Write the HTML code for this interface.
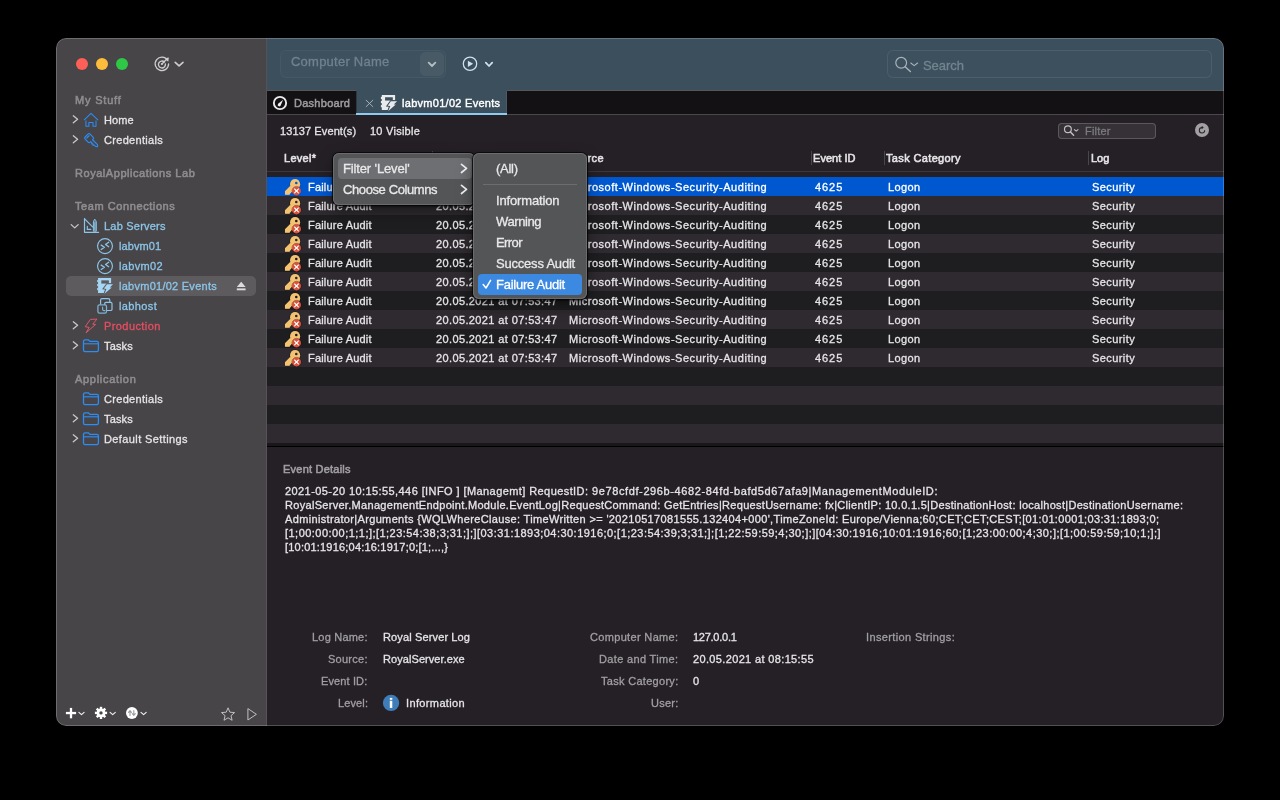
<!DOCTYPE html>
<html><head><meta charset="utf-8"><title>Royal TSX</title>
<style>
html,body{margin:0;padding:0;background:#000;}
body{width:1280px;height:800px;overflow:hidden;position:relative;font-family:"Liberation Sans",sans-serif;font-size:11px;}
.a{position:absolute;}
.t{position:absolute;white-space:pre;line-height:1;z-index:2;font-size:11px;will-change:transform;-webkit-text-stroke:0.3px currentColor;}
.b{-webkit-text-stroke:0.55px currentColor;}
svg{position:absolute;overflow:visible;}
#win{position:absolute;left:56px;top:38px;width:1168px;height:688px;border-radius:10px;overflow:hidden;background:#252026;}
</style></head><body>
<div class="a" id="clip" style="left:0;top:0;width:1280px;height:800px;clip-path:inset(38px 56px 74px 56px round 10px);">
<div class="a" style="left:56px;top:38px;width:210px;height:688px;background:#474547;"></div>
<div class="a" style="left:266px;top:38px;width:1px;height:688px;background:#555355;"></div>
<div class="a" style="left:267px;top:38px;width:957px;height:52px;background:#3c4f5c;"></div>
<div class="a" style="left:267px;top:91px;width:957px;height:24px;background:#131113;"></div>
<div class="a" style="left:267px;top:90px;width:957px;height:1px;background:#575757;"></div>
<div class="a" style="left:267px;top:114px;width:957px;height:1px;background:#4a484b;"></div>
<div class="a" style="left:356px;top:90px;width:151px;height:25px;background:#3c4f5c;"></div>
<div class="a" style="left:356px;top:113px;width:151px;height:2px;background:#8fcaf0;"></div>
<div class="a" style="left:356px;top:91px;width:1px;height:22px;background:#2c3a44;"></div>
<div class="a" style="left:506px;top:91px;width:1px;height:22px;background:#4b5a64;"></div>
<div class="a" style="left:267px;top:115px;width:957px;height:611px;background:#252026;"></div>
<div class="a" style="left:267px;top:171px;width:957px;height:1px;background:#3b383c;"></div>
<div class="a" style="left:267px;top:177px;width:957px;height:19px;background:#0058d0;"></div>
<div class="a" style="left:267px;top:196px;width:957px;height:19px;background:#2e2a2f;"></div>
<div class="a" style="left:267px;top:215px;width:957px;height:19px;background:#1e1d1f;"></div>
<div class="a" style="left:267px;top:234px;width:957px;height:19px;background:#2e2a2f;"></div>
<div class="a" style="left:267px;top:253px;width:957px;height:19px;background:#1e1d1f;"></div>
<div class="a" style="left:267px;top:272px;width:957px;height:19px;background:#2e2a2f;"></div>
<div class="a" style="left:267px;top:291px;width:957px;height:19px;background:#1e1d1f;"></div>
<div class="a" style="left:267px;top:310px;width:957px;height:19px;background:#2e2a2f;"></div>
<div class="a" style="left:267px;top:329px;width:957px;height:19px;background:#1e1d1f;"></div>
<div class="a" style="left:267px;top:348px;width:957px;height:19px;background:#2e2a2f;"></div>
<div class="a" style="left:267px;top:367px;width:957px;height:19px;background:#1e1d1f;"></div>
<div class="a" style="left:267px;top:386px;width:957px;height:19px;background:#2e2a2f;"></div>
<div class="a" style="left:267px;top:405px;width:957px;height:19px;background:#1e1d1f;"></div>
<div class="a" style="left:267px;top:424px;width:957px;height:19px;background:#2e2a2f;"></div>
<div class="a" style="left:267px;top:443px;width:957px;height:3px;background:#19171a;"></div>
<div class="a" style="left:267px;top:446px;width:957px;height:1px;background:#000;"></div>
<div class="a" style="left:432px;top:151px;width:1px;height:14px;background:#4a474b;"></div>
<div class="a" style="left:811px;top:151px;width:1px;height:14px;background:#4a474b;"></div>
<div class="a" style="left:884px;top:151px;width:1px;height:14px;background:#4a474b;"></div>
<div class="a" style="left:1088px;top:151px;width:1px;height:14px;background:#4a474b;"></div>
<div class="a" style="left:76px;top:58px;width:12px;height:12px;background:#fe5f57;border-radius:50%;"></div>
<div class="a" style="left:96px;top:58px;width:12px;height:12px;background:#fdbc3c;border-radius:50%;"></div>
<div class="a" style="left:116px;top:58px;width:12px;height:12px;background:#2fc746;border-radius:50%;"></div>
<div class="a" style="left:280px;top:50px;width:166px;height:28px;background:#3e515e;border-radius:6px;box-shadow:inset 0 0 0 1px #455864;"></div>
<div class="a" style="left:420px;top:52px;width:23.6px;height:24px;background:#485a66;border-radius:5.5px;"></div>
<div class="a" style="left:887px;top:50px;width:325px;height:28px;background:#3d505d;border-radius:6px;box-shadow:inset 0 0 0 1px #4b5e6a;"></div>
<div class="a" style="left:1058px;top:123px;width:98px;height:16px;background:#353136;border-radius:4px;box-shadow:inset 0 0 0 1px #5b585c;"></div>
<div class="a" style="left:1194.9px;top:122.8px;width:14.2px;height:14.2px;background:#a2a0a3;border-radius:50%;"></div>
<div class="a" style="left:66px;top:276px;width:190px;height:20px;background:#5d5b5e;border-radius:5px;"></div>
<div class="a" style="left:333px;top:153px;width:142px;height:52px;background:#545557;z-index:5;border-radius:6px;box-shadow:0 0 0 1px rgba(0,0,0,.6), 0 1px 2px 1px rgba(0,0,0,.5), inset 0 0 0 1px #6b6b6d, 0 6px 16px rgba(0,0,0,.4);"></div>
<div class="a" style="left:338px;top:158px;width:134px;height:21px;background:#6e6f72;z-index:6;border-radius:4px;"></div>
<div class="a" style="left:473px;top:153px;width:113.5px;height:146px;background:#545557;z-index:7;border-radius:6px;box-shadow:0 0 0 1px rgba(0,0,0,.6), 0 1px 2px 1px rgba(0,0,0,.5), inset 0 0 0 1px #6b6b6d, 0 6px 16px rgba(0,0,0,.4);"></div>
<div class="a" style="left:483px;top:184px;width:94px;height:1px;background:#6d6d6f;z-index:8;"></div>
<div class="a" style="left:478px;top:274px;width:104px;height:21px;background:#3c89e2;z-index:8;border-radius:4px;"></div>
<svg width="1280" height="800" viewBox="0 0 1280 800" style="left:0;top:0;z-index:3"><path d="M167.6 60.3 A6.7 6.7 0 1 0 168.6 64" fill="none" stroke="#cfcdd0" stroke-width="1.3" stroke-linecap="round" stroke-linejoin="round"/><path d="M164.4 62 A3.5 3.5 0 1 0 165.4 64" fill="none" stroke="#cfcdd0" stroke-width="1.3" stroke-linecap="round" stroke-linejoin="round"/><circle cx="161.9" cy="64" r="1.1" fill="#cfcdd0"/><path d="M162.2 63.7 L166.4 59.5" fill="none" stroke="#cfcdd0" stroke-width="1.3" stroke-linecap="round" stroke-linejoin="round"/><path d="M164.6 58.2 L168.9 57.5 L168.2 61.8 Z" fill="#cfcdd0" /><path d="M175.2 62.3 L179.1 65.9 L183 62.3" fill="none" stroke="#cfcdd0" stroke-width="1.6" stroke-linecap="round" stroke-linejoin="round"/><path d="M428.7 62.7 L432 66 L435.3 62.7" fill="none" stroke="#b4bbc1" stroke-width="1.9" stroke-linecap="round" stroke-linejoin="round"/><circle cx="470" cy="63.75" r="6.7" fill="none" stroke="#d0e2ee" stroke-width="1.25"/><path d="M467.9 60.7 L473.1 63.85 L467.9 67 Z" fill="#d0e2ee" /><path d="M485.8 62.7 L489 66 L492.2 62.7" fill="none" stroke="#d0e2ee" stroke-width="1.75" stroke-linecap="round" stroke-linejoin="round"/><circle cx="901.2" cy="62.8" r="5.4" fill="none" stroke="#aab4ba" stroke-width="1.2"/><path d="M905.1 66.7 L910.4 71.6" fill="none" stroke="#aab4ba" stroke-width="1.4" stroke-linecap="round" stroke-linejoin="round"/><path d="M910.8 63 L914.2 65.6 L917.6 63" fill="none" stroke="#aab4ba" stroke-width="1.1" stroke-linecap="round" stroke-linejoin="round"/><circle cx="1067.9" cy="129.3" r="3.4" fill="none" stroke="#c1bfc2" stroke-width="1.2"/><path d="M1070.4 131.9 L1073.6 135.2" fill="none" stroke="#c1bfc2" stroke-width="1.4" stroke-linecap="round" stroke-linejoin="round"/><path d="M1074.4 129.6 L1076.2 131.2 L1078 129.6" fill="none" stroke="#c1bfc2" stroke-width="1.1" stroke-linecap="round" stroke-linejoin="round"/><path d="M1204.7 130.5 A2.7 2.7 0 1 1 1202 127.6" fill="none" stroke="#2a262b" stroke-width="1.05" stroke-linecap="round" stroke-linejoin="round"/><path d="M1201.7 125.8 L1203.8 127.6 L1201.7 129.3 Z" fill="#2a262b" /><circle cx="280" cy="103" r="6.15" fill="none" stroke="#ebebeb" stroke-width="1.9"/><path d="M277.7 105.6 L278.1 103.8 L283.1 99.7 L280.4 105.9 Q279 107 277.7 105.6 Z" fill="#f4f4f4" /><path d="M365.9 100 L373.1 106.9 M373.1 100 L365.9 106.9" fill="none" stroke="#aeb9c0" stroke-width="0.9" /><path d="M381.80 94.95 L395.10 94.95 L395.10 100.35 L391.20 100.35 L387.00 105.85 L389.30 106.15 L388.00 110.05 L381.80 110.05 Z" fill="#e8eaec" /><rect x="380.90" y="96.85" width="1.20" height="2.20" fill="#e8eaec"/><rect x="380.90" y="100.95" width="1.20" height="2.20" fill="#e8eaec"/><rect x="380.90" y="105.05" width="1.20" height="2.20" fill="#e8eaec"/><rect x="385.10" y="97.25" width="7.70" height="3.30" fill="#3c4f5c"/><path d="M390.90 101.25 L397.10 101.25 L393.70 104.55 L395.80 104.55 L388.30 110.95 L390.30 105.95 L387.70 105.65 Z" fill="#e8eaec" stroke="#3c4f5c" stroke-width="2" stroke-linejoin="miter" paint-order="stroke"/><path d="M98.08 278.10 L111.12 278.10 L111.12 283.39 L107.30 283.39 L103.18 288.78 L105.43 289.08 L104.16 292.90 L98.08 292.90 Z" fill="#a6d6f6" /><rect x="97.20" y="279.96" width="1.18" height="2.16" fill="#a6d6f6"/><rect x="97.20" y="283.98" width="1.18" height="2.16" fill="#a6d6f6"/><rect x="97.20" y="288.00" width="1.18" height="2.16" fill="#a6d6f6"/><rect x="101.32" y="280.35" width="7.55" height="3.23" fill="#5d5b5e"/><path d="M107.00 284.27 L113.08 284.27 L109.75 287.51 L111.80 287.51 L104.45 293.78 L106.41 288.88 L103.87 288.59 Z" fill="#a6d6f6" stroke="#5d5b5e" stroke-width="1.96" stroke-linejoin="miter" paint-order="stroke"/><path d="M73.3 115.8 L77.6 119.3 L73.3 122.8" fill="none" stroke="#c9c7ca" stroke-width="1.3" stroke-linecap="round" stroke-linejoin="round"/><path d="M73.3 135.8 L77.6 139.3 L73.3 142.8" fill="none" stroke="#c9c7ca" stroke-width="1.3" stroke-linecap="round" stroke-linejoin="round"/><path d="M73.3 321.8 L77.6 325.3 L73.3 328.8" fill="none" stroke="#c9c7ca" stroke-width="1.3" stroke-linecap="round" stroke-linejoin="round"/><path d="M73.3 341.8 L77.6 345.3 L73.3 348.8" fill="none" stroke="#c9c7ca" stroke-width="1.3" stroke-linecap="round" stroke-linejoin="round"/><path d="M73.3 414.8 L77.6 418.3 L73.3 421.8" fill="none" stroke="#c9c7ca" stroke-width="1.3" stroke-linecap="round" stroke-linejoin="round"/><path d="M73.3 434.8 L77.6 438.3 L73.3 441.8" fill="none" stroke="#c9c7ca" stroke-width="1.3" stroke-linecap="round" stroke-linejoin="round"/><path d="M71.2 224.6 L74.7 227.9 L78.2 224.6" fill="none" stroke="#c9c7ca" stroke-width="1.3" stroke-linecap="round" stroke-linejoin="round"/><path d="M84.3 119.8 L91 113.3 L97.8 119.8" fill="none" stroke="#2b8df6" stroke-width="1.05" stroke-linecap="round" stroke-linejoin="round"/><path d="M85.9 120.6 V126.3 H88.9 V122.5 H93 V126.3 H96 V120.6" fill="none" stroke="#2b8df6" stroke-width="1.05" stroke-linejoin="round"/><g transform="translate(89.1 138.1) rotate(45)" fill="none" stroke="#2b8df6" stroke-width="1.15" stroke-linejoin="round" stroke-linecap="round"><path d="M3.6 -1.3 V-2 Q3.6 -3.5 2.1 -3.5 H-2.1 Q-3.6 -3.5 -3.6 -2 V2 Q-3.6 3.5 -2.1 3.5 H2.1 Q3.6 3.5 3.6 2 V1.4 H5.2 L5.9 2.3 L6.8 1.4 L7.7 2.3 L8.6 1.4 H10.4 L12 0 L10.6 -1.3 Z"/><path d="M-1.7 -1.6 V1.6"/></g><path d="M84.5 218.6 V232.3 H98.6" fill="none" stroke="#8cc5e8" stroke-width="1.2" stroke-linecap="round" stroke-linejoin="round"/><path d="M84.6 218.8 L92.6 226.8" fill="none" stroke="#8cc5e8" stroke-width="1.2" stroke-linecap="round" stroke-linejoin="round"/><path d="M87.3 226.2 V229.4 H90.8" fill="none" stroke="#8cc5e8" stroke-width="1.15" stroke-linecap="round" stroke-linejoin="round"/><path d="M93.4 230.8 V221.9 Q93.6 220.6 94.8 219.2 Q96 220.6 96.3 221.9 V230.8 Z" fill="rgba(140,197,232,.4)" stroke="#8cc5e8" stroke-width="1" stroke-linecap="round" stroke-linejoin="round"/><path d="M94.85 222.2 V230.4" fill="none" stroke="#8cc5e8" stroke-width="0.9" /><circle cx="105" cy="246.1" r="7.45" fill="none" stroke="#8cc5e8" stroke-width="1.15"/><path d="M101.2 245.10 L104.4 247.30 L101.2 249.50" fill="none" stroke="#8cc5e8" stroke-width="1.3" stroke-linecap="round" stroke-linejoin="round"/><path d="M108.7 242.30 L105.5 244.50 L108.7 246.70" fill="none" stroke="#8cc5e8" stroke-width="1.3" stroke-linecap="round" stroke-linejoin="round"/><circle cx="105" cy="266.1" r="7.45" fill="none" stroke="#8cc5e8" stroke-width="1.15"/><path d="M101.2 265.10 L104.4 267.30 L101.2 269.50" fill="none" stroke="#8cc5e8" stroke-width="1.3" stroke-linecap="round" stroke-linejoin="round"/><path d="M108.7 262.30 L105.5 264.50 L108.7 266.70" fill="none" stroke="#8cc5e8" stroke-width="1.3" stroke-linecap="round" stroke-linejoin="round"/><path d="M100.6 304 V300.2 Q100.6 298.7 102.1 298.7 H108.3 Q109.8 298.7 109.8 300.2 V301.8" fill="none" stroke="#8cc5e8" stroke-width="1.2" stroke-linecap="round" stroke-linejoin="round"/><rect x="104.7" y="302.3" width="7.3" height="8.2" rx="1.3" fill="none" stroke="#8cc5e8" stroke-width="1.2"/><rect x="97.9" y="304.9" width="8.6" height="8.3" rx="1.6" fill="#474547" stroke="#80b2d2" stroke-width="1.25"/><path d="M102.6 307 V309.4 Q102.7 310.6 104 310.6 H105" fill="none" stroke="#80b2d2" stroke-width="1.1" stroke-linecap="round" stroke-linejoin="round"/><path d="M90.4 319.4 L96.9 319.1 L92.7 324.2 L95.6 324.4 L86.1 332.8 L89.2 327.4 L85.2 326.7 Z" fill="none" stroke="#e8566e" stroke-width="0.95" stroke-linejoin="round"/><path d="M83.5 350.1 V341.3 Q83.5 339.8 85.1 339.8 H88.3 L89.9 341.4 H96.8 Q98.4 341.4 98.4 343.0 V350.1 Q98.4 351.7 96.8 351.7 H85.1 Q83.5 351.7 83.5 350.1 Z" fill="none" stroke="#2b8df6" stroke-width="1.3" stroke-linejoin="round"/><path d="M83.8 343.8 H98.1" fill="none" stroke="#2b8df6" stroke-width="1.15" /><path d="M83.5 403.1 V394.3 Q83.5 392.8 85.1 392.8 H88.3 L89.9 394.4 H96.8 Q98.4 394.4 98.4 396.0 V403.1 Q98.4 404.7 96.8 404.7 H85.1 Q83.5 404.7 83.5 403.1 Z" fill="none" stroke="#2b8df6" stroke-width="1.3" stroke-linejoin="round"/><path d="M83.8 396.8 H98.1" fill="none" stroke="#2b8df6" stroke-width="1.15" /><path d="M83.5 423.1 V414.3 Q83.5 412.8 85.1 412.8 H88.3 L89.9 414.4 H96.8 Q98.4 414.4 98.4 416.0 V423.1 Q98.4 424.7 96.8 424.7 H85.1 Q83.5 424.7 83.5 423.1 Z" fill="none" stroke="#2b8df6" stroke-width="1.3" stroke-linejoin="round"/><path d="M83.8 416.8 H98.1" fill="none" stroke="#2b8df6" stroke-width="1.15" /><path d="M83.5 443.1 V434.3 Q83.5 432.8 85.1 432.8 H88.3 L89.9 434.4 H96.8 Q98.4 434.4 98.4 436.0 V443.1 Q98.4 444.7 96.8 444.7 H85.1 Q83.5 444.7 83.5 443.1 Z" fill="none" stroke="#2b8df6" stroke-width="1.3" stroke-linejoin="round"/><path d="M83.8 436.8 H98.1" fill="none" stroke="#2b8df6" stroke-width="1.15" /><path d="M241.2 281.8 L245.6 287 H236.8 Z" fill="#dddbde" /><rect x="236.8" y="288.4" width="8.8" height="1.9" fill="#dddbde"/><rect x="65.9" y="711.9" width="10.2" height="2.3" fill="#fff"/><rect x="69.85" y="707.9" width="2.3" height="10.4" fill="#fff"/><path d="M78.9 712.3 L81.5 714.7 L84.1 712.3" fill="none" stroke="#f0eef1" stroke-width="1.15" stroke-linecap="round" stroke-linejoin="round"/><path d="M110.1 712.3 L112.7 714.7 L115.3 712.3" fill="none" stroke="#f0eef1" stroke-width="1.15" stroke-linecap="round" stroke-linejoin="round"/><path d="M141.0 712.3 L143.6 714.7 L146.2 712.3" fill="none" stroke="#f0eef1" stroke-width="1.15" stroke-linecap="round" stroke-linejoin="round"/><rect x="99.80" y="706.80" width="2.4" height="3" fill="#fff" transform="rotate(0 101.00 712.90)"/><rect x="99.80" y="706.80" width="2.4" height="3" fill="#fff" transform="rotate(45 101.00 712.90)"/><rect x="99.80" y="706.80" width="2.4" height="3" fill="#fff" transform="rotate(90 101.00 712.90)"/><rect x="99.80" y="706.80" width="2.4" height="3" fill="#fff" transform="rotate(135 101.00 712.90)"/><rect x="99.80" y="706.80" width="2.4" height="3" fill="#fff" transform="rotate(180 101.00 712.90)"/><rect x="99.80" y="706.80" width="2.4" height="3" fill="#fff" transform="rotate(225 101.00 712.90)"/><rect x="99.80" y="706.80" width="2.4" height="3" fill="#fff" transform="rotate(270 101.00 712.90)"/><rect x="99.80" y="706.80" width="2.4" height="3" fill="#fff" transform="rotate(315 101.00 712.90)"/><circle cx="101" cy="712.9" r="3.05" fill="none" stroke="#fff" stroke-width="2.7"/><circle cx="131.9" cy="713" r="5.9" fill="#fff"/><path d="M130 715.4 V711 M128.5 712.3 L130 710.7 L131.5 712.3" fill="none" stroke="#9c9a9d" stroke-width="1.1" stroke-linecap="round" stroke-linejoin="round"/><path d="M133.8 710.6 V715 M132.3 713.7 L133.8 715.3 L135.3 713.7" fill="none" stroke="#9c9a9d" stroke-width="1.1" stroke-linecap="round" stroke-linejoin="round"/><path d="M228.05 707.80 L229.87 712.19 L234.61 712.57 L231.00 715.66 L232.11 720.28 L228.05 717.80 L223.99 720.28 L225.10 715.66 L221.49 712.57 L226.23 712.19 Z" fill="none" stroke="#c1bfc2" stroke-width="1" stroke-linejoin="round"/><path d="M247.9 708.6 L256.4 714.3 L247.9 720 Z" fill="none" stroke="#c1bfc2" stroke-width="1" stroke-linejoin="round"/><g transform="translate(280 177.4)"><path d="M10.3 8.6 L4.9 13.9 V17.3 H9.8 V15.9 H11.2 V14.5 H12.6 L16 11 Z" fill="#f3c372" stroke="rgba(0,50,150,.45)" stroke-width="1" paint-order="stroke"/><circle cx="15.1" cy="6.8" r="5.1" fill="#f3c372" stroke="rgba(0,50,150,.45)" stroke-width="1" paint-order="stroke"/><path d="M10.3 8.6 L5.4 13.9 V16.8 H9.3 L15 11 Z" fill="#f3c372"/><circle cx="16.3" cy="5.6" r="1.3" fill="#0058d0"/><circle cx="16.5" cy="13.5" r="4.5" fill="#da523b" stroke="rgba(0,50,150,.45)" stroke-width=".8" paint-order="stroke"/><path d="M14.6 11.6 L18.4 15.4 M18.4 11.6 L14.6 15.4" stroke="#fff" stroke-width="1.1" stroke-linecap="round"/></g><g transform="translate(280 196.4)"><path d="M10.3 8.6 L4.9 13.9 V17.3 H9.8 V15.9 H11.2 V14.5 H12.6 L16 11 Z" fill="#f3c372" stroke="rgba(10,8,20,.55)" stroke-width="1" paint-order="stroke"/><circle cx="15.1" cy="6.8" r="5.1" fill="#f3c372" stroke="rgba(10,8,20,.55)" stroke-width="1" paint-order="stroke"/><path d="M10.3 8.6 L5.4 13.9 V16.8 H9.3 L15 11 Z" fill="#f3c372"/><circle cx="16.3" cy="5.6" r="1.3" fill="#2a262b"/><circle cx="16.5" cy="13.5" r="4.5" fill="#da523b" stroke="rgba(10,8,20,.55)" stroke-width=".8" paint-order="stroke"/><path d="M14.6 11.6 L18.4 15.4 M18.4 11.6 L14.6 15.4" stroke="#fff" stroke-width="1.1" stroke-linecap="round"/></g><g transform="translate(280 215.4)"><path d="M10.3 8.6 L4.9 13.9 V17.3 H9.8 V15.9 H11.2 V14.5 H12.6 L16 11 Z" fill="#f3c372" stroke="rgba(10,8,20,.55)" stroke-width="1" paint-order="stroke"/><circle cx="15.1" cy="6.8" r="5.1" fill="#f3c372" stroke="rgba(10,8,20,.55)" stroke-width="1" paint-order="stroke"/><path d="M10.3 8.6 L5.4 13.9 V16.8 H9.3 L15 11 Z" fill="#f3c372"/><circle cx="16.3" cy="5.6" r="1.3" fill="#1c1a1d"/><circle cx="16.5" cy="13.5" r="4.5" fill="#da523b" stroke="rgba(10,8,20,.55)" stroke-width=".8" paint-order="stroke"/><path d="M14.6 11.6 L18.4 15.4 M18.4 11.6 L14.6 15.4" stroke="#fff" stroke-width="1.1" stroke-linecap="round"/></g><g transform="translate(280 234.4)"><path d="M10.3 8.6 L4.9 13.9 V17.3 H9.8 V15.9 H11.2 V14.5 H12.6 L16 11 Z" fill="#f3c372" stroke="rgba(10,8,20,.55)" stroke-width="1" paint-order="stroke"/><circle cx="15.1" cy="6.8" r="5.1" fill="#f3c372" stroke="rgba(10,8,20,.55)" stroke-width="1" paint-order="stroke"/><path d="M10.3 8.6 L5.4 13.9 V16.8 H9.3 L15 11 Z" fill="#f3c372"/><circle cx="16.3" cy="5.6" r="1.3" fill="#2a262b"/><circle cx="16.5" cy="13.5" r="4.5" fill="#da523b" stroke="rgba(10,8,20,.55)" stroke-width=".8" paint-order="stroke"/><path d="M14.6 11.6 L18.4 15.4 M18.4 11.6 L14.6 15.4" stroke="#fff" stroke-width="1.1" stroke-linecap="round"/></g><g transform="translate(280 253.4)"><path d="M10.3 8.6 L4.9 13.9 V17.3 H9.8 V15.9 H11.2 V14.5 H12.6 L16 11 Z" fill="#f3c372" stroke="rgba(10,8,20,.55)" stroke-width="1" paint-order="stroke"/><circle cx="15.1" cy="6.8" r="5.1" fill="#f3c372" stroke="rgba(10,8,20,.55)" stroke-width="1" paint-order="stroke"/><path d="M10.3 8.6 L5.4 13.9 V16.8 H9.3 L15 11 Z" fill="#f3c372"/><circle cx="16.3" cy="5.6" r="1.3" fill="#1c1a1d"/><circle cx="16.5" cy="13.5" r="4.5" fill="#da523b" stroke="rgba(10,8,20,.55)" stroke-width=".8" paint-order="stroke"/><path d="M14.6 11.6 L18.4 15.4 M18.4 11.6 L14.6 15.4" stroke="#fff" stroke-width="1.1" stroke-linecap="round"/></g><g transform="translate(280 272.4)"><path d="M10.3 8.6 L4.9 13.9 V17.3 H9.8 V15.9 H11.2 V14.5 H12.6 L16 11 Z" fill="#f3c372" stroke="rgba(10,8,20,.55)" stroke-width="1" paint-order="stroke"/><circle cx="15.1" cy="6.8" r="5.1" fill="#f3c372" stroke="rgba(10,8,20,.55)" stroke-width="1" paint-order="stroke"/><path d="M10.3 8.6 L5.4 13.9 V16.8 H9.3 L15 11 Z" fill="#f3c372"/><circle cx="16.3" cy="5.6" r="1.3" fill="#2a262b"/><circle cx="16.5" cy="13.5" r="4.5" fill="#da523b" stroke="rgba(10,8,20,.55)" stroke-width=".8" paint-order="stroke"/><path d="M14.6 11.6 L18.4 15.4 M18.4 11.6 L14.6 15.4" stroke="#fff" stroke-width="1.1" stroke-linecap="round"/></g><g transform="translate(280 291.4)"><path d="M10.3 8.6 L4.9 13.9 V17.3 H9.8 V15.9 H11.2 V14.5 H12.6 L16 11 Z" fill="#f3c372" stroke="rgba(10,8,20,.55)" stroke-width="1" paint-order="stroke"/><circle cx="15.1" cy="6.8" r="5.1" fill="#f3c372" stroke="rgba(10,8,20,.55)" stroke-width="1" paint-order="stroke"/><path d="M10.3 8.6 L5.4 13.9 V16.8 H9.3 L15 11 Z" fill="#f3c372"/><circle cx="16.3" cy="5.6" r="1.3" fill="#1c1a1d"/><circle cx="16.5" cy="13.5" r="4.5" fill="#da523b" stroke="rgba(10,8,20,.55)" stroke-width=".8" paint-order="stroke"/><path d="M14.6 11.6 L18.4 15.4 M18.4 11.6 L14.6 15.4" stroke="#fff" stroke-width="1.1" stroke-linecap="round"/></g><g transform="translate(280 310.4)"><path d="M10.3 8.6 L4.9 13.9 V17.3 H9.8 V15.9 H11.2 V14.5 H12.6 L16 11 Z" fill="#f3c372" stroke="rgba(10,8,20,.55)" stroke-width="1" paint-order="stroke"/><circle cx="15.1" cy="6.8" r="5.1" fill="#f3c372" stroke="rgba(10,8,20,.55)" stroke-width="1" paint-order="stroke"/><path d="M10.3 8.6 L5.4 13.9 V16.8 H9.3 L15 11 Z" fill="#f3c372"/><circle cx="16.3" cy="5.6" r="1.3" fill="#2a262b"/><circle cx="16.5" cy="13.5" r="4.5" fill="#da523b" stroke="rgba(10,8,20,.55)" stroke-width=".8" paint-order="stroke"/><path d="M14.6 11.6 L18.4 15.4 M18.4 11.6 L14.6 15.4" stroke="#fff" stroke-width="1.1" stroke-linecap="round"/></g><g transform="translate(280 329.4)"><path d="M10.3 8.6 L4.9 13.9 V17.3 H9.8 V15.9 H11.2 V14.5 H12.6 L16 11 Z" fill="#f3c372" stroke="rgba(10,8,20,.55)" stroke-width="1" paint-order="stroke"/><circle cx="15.1" cy="6.8" r="5.1" fill="#f3c372" stroke="rgba(10,8,20,.55)" stroke-width="1" paint-order="stroke"/><path d="M10.3 8.6 L5.4 13.9 V16.8 H9.3 L15 11 Z" fill="#f3c372"/><circle cx="16.3" cy="5.6" r="1.3" fill="#1c1a1d"/><circle cx="16.5" cy="13.5" r="4.5" fill="#da523b" stroke="rgba(10,8,20,.55)" stroke-width=".8" paint-order="stroke"/><path d="M14.6 11.6 L18.4 15.4 M18.4 11.6 L14.6 15.4" stroke="#fff" stroke-width="1.1" stroke-linecap="round"/></g><g transform="translate(280 348.4)"><path d="M10.3 8.6 L4.9 13.9 V17.3 H9.8 V15.9 H11.2 V14.5 H12.6 L16 11 Z" fill="#f3c372" stroke="rgba(10,8,20,.55)" stroke-width="1" paint-order="stroke"/><circle cx="15.1" cy="6.8" r="5.1" fill="#f3c372" stroke="rgba(10,8,20,.55)" stroke-width="1" paint-order="stroke"/><path d="M10.3 8.6 L5.4 13.9 V16.8 H9.3 L15 11 Z" fill="#f3c372"/><circle cx="16.3" cy="5.6" r="1.3" fill="#2a262b"/><circle cx="16.5" cy="13.5" r="4.5" fill="#da523b" stroke="rgba(10,8,20,.55)" stroke-width=".8" paint-order="stroke"/><path d="M14.6 11.6 L18.4 15.4 M18.4 11.6 L14.6 15.4" stroke="#fff" stroke-width="1.1" stroke-linecap="round"/></g><circle cx="391.05" cy="702.95" r="8.15" fill="#3f7db9"/><rect x="389.8" y="697.9" width="2.5" height="1.9" fill="#fff"/><rect x="389.8" y="700.8" width="2.5" height="7.1" fill="#fff"/></svg>
<svg width="1280" height="800" viewBox="0 0 1280 800" style="left:0;top:0;z-index:10"><path d="M461.5 164.3 L466.5 168.4 L461.5 172.5" fill="none" stroke="#e9e9ea" stroke-width="1.7" stroke-linecap="round" stroke-linejoin="round"/><path d="M461.5 185.3 L466.5 189.4 L461.5 193.5" fill="none" stroke="#e9e9ea" stroke-width="1.7" stroke-linecap="round" stroke-linejoin="round"/><path d="M483.2 284.6 L486 288 L490.6 280.4" fill="none" stroke="#fff" stroke-width="1.5" stroke-linecap="round" stroke-linejoin="round"/></svg>
<span class="t b" style="top:94.50px;letter-spacing:0.806px;left:74.60px;color:#8f8d91">My Stuff</span>
<span class="t" style="top:114.50px;letter-spacing:0.119px;left:104.40px;color:#e6e4e7">Home</span>
<span class="t" style="top:134.50px;letter-spacing:0.306px;left:104.40px;color:#e6e4e7">Credentials</span>
<span class="t b" style="top:167.50px;letter-spacing:0.547px;left:74.60px;color:#8f8d91">RoyalApplications Lab</span>
<span class="t b" style="top:200.50px;letter-spacing:0.579px;left:74.60px;color:#8f8d91">Team Connections</span>
<span class="t" style="top:220.50px;letter-spacing:0.219px;left:104.40px;color:#8cc5e8">Lab Servers</span>
<span class="t" style="top:240.50px;letter-spacing:0.104px;left:118.50px;color:#8cc5e8">labvm01</span>
<span class="t" style="top:260.50px;letter-spacing:0.354px;left:118.50px;color:#8cc5e8">labvm02</span>
<span class="t" style="top:280.50px;letter-spacing:0.259px;left:118.50px;color:#8cc5e8">labvm01/02 Events</span>
<span class="t" style="top:300.50px;letter-spacing:0.369px;left:118.50px;color:#8cc5e8">labhost</span>
<span class="t" style="top:320.50px;letter-spacing:0.412px;left:104.40px;color:#e84e62">Production</span>
<span class="t" style="top:340.50px;letter-spacing:0.144px;left:104.40px;color:#e6e4e7">Tasks</span>
<span class="t b" style="top:373.50px;letter-spacing:0.697px;left:74.60px;color:#8f8d91">Application</span>
<span class="t" style="top:393.50px;letter-spacing:0.306px;left:104.40px;color:#e6e4e7">Credentials</span>
<span class="t" style="top:413.50px;letter-spacing:0.144px;left:104.40px;color:#e6e4e7">Tasks</span>
<span class="t" style="top:433.50px;letter-spacing:0.396px;left:104.40px;color:#e6e4e7">Default Settings</span>
<span class="t" style="top:55.00px;letter-spacing:0.235px;left:290.60px;font-size:13px;color:#70828d">Computer Name</span>
<span class="t" style="top:59.00px;letter-spacing:-0.061px;left:922.70px;font-size:13px;color:#72848f">Search</span>
<span class="t" style="top:97.50px;letter-spacing:0.271px;left:293.80px;color:#9d9b9e;-webkit-text-stroke:0.5px currentColor">Dashboard</span>
<span class="t" style="top:97.50px;letter-spacing:0.284px;left:402.40px;color:#ffffff;-webkit-text-stroke:0.4px currentColor">labvm01/02 Events</span>
<span class="t" style="top:125.50px;letter-spacing:0.115px;left:280.20px;color:#e6e4e7">13137 Event(s)</span>
<span class="t" style="top:125.50px;letter-spacing:0.256px;left:370.10px;color:#e6e4e7">10 Visible</span>
<span class="t" style="top:125.50px;letter-spacing:0.189px;left:1084.80px;color:#7d7b7f">Filter</span>
<span class="t b" style="top:152.50px;letter-spacing:0.284px;left:283.50px;color:#e6e4e7">Level*</span>
<span class="t b" style="top:152.50px;letter-spacing:0.328px;left:567.00px;color:#e6e4e7">Source</span>
<span class="t b" style="top:152.50px;letter-spacing:0.045px;left:813.20px;color:#e6e4e7">Event ID</span>
<span class="t b" style="top:152.50px;letter-spacing:0.357px;left:886.30px;color:#e6e4e7">Task Category</span>
<span class="t b" style="top:152.50px;letter-spacing:-0.030px;left:1090.50px;color:#e6e4e7">Log</span>
<span class="t" style="top:181.50px;letter-spacing:0.195px;left:307.50px;color:#ffffff">Failure Audit</span>
<span class="t" style="top:181.50px;letter-spacing:0.382px;left:436.00px;color:#ffffff">20.05.2021 at 07:53:47</span>
<span class="t" style="top:181.50px;letter-spacing:0.529px;left:569.00px;color:#ffffff">Microsoft-Windows-Security-Auditing</span>
<span class="t" style="top:181.50px;letter-spacing:0.939px;left:814.90px;color:#ffffff">4625</span>
<span class="t" style="top:181.50px;letter-spacing:0.352px;left:888.00px;color:#ffffff">Logon</span>
<span class="t" style="top:181.50px;letter-spacing:0.421px;left:1091.90px;color:#ffffff">Security</span>
<span class="t" style="top:200.50px;letter-spacing:0.195px;left:307.50px;color:#e6e4e7">Failure Audit</span>
<span class="t" style="top:200.50px;letter-spacing:0.382px;left:436.00px;color:#e6e4e7">20.05.2021 at 07:53:47</span>
<span class="t" style="top:200.50px;letter-spacing:0.529px;left:569.00px;color:#e6e4e7">Microsoft-Windows-Security-Auditing</span>
<span class="t" style="top:200.50px;letter-spacing:0.939px;left:814.90px;color:#e6e4e7">4625</span>
<span class="t" style="top:200.50px;letter-spacing:0.352px;left:888.00px;color:#e6e4e7">Logon</span>
<span class="t" style="top:200.50px;letter-spacing:0.421px;left:1091.90px;color:#e6e4e7">Security</span>
<span class="t" style="top:219.50px;letter-spacing:0.195px;left:307.50px;color:#e6e4e7">Failure Audit</span>
<span class="t" style="top:219.50px;letter-spacing:0.382px;left:436.00px;color:#e6e4e7">20.05.2021 at 07:53:47</span>
<span class="t" style="top:219.50px;letter-spacing:0.529px;left:569.00px;color:#e6e4e7">Microsoft-Windows-Security-Auditing</span>
<span class="t" style="top:219.50px;letter-spacing:0.939px;left:814.90px;color:#e6e4e7">4625</span>
<span class="t" style="top:219.50px;letter-spacing:0.352px;left:888.00px;color:#e6e4e7">Logon</span>
<span class="t" style="top:219.50px;letter-spacing:0.421px;left:1091.90px;color:#e6e4e7">Security</span>
<span class="t" style="top:238.50px;letter-spacing:0.195px;left:307.50px;color:#e6e4e7">Failure Audit</span>
<span class="t" style="top:238.50px;letter-spacing:0.382px;left:436.00px;color:#e6e4e7">20.05.2021 at 07:53:47</span>
<span class="t" style="top:238.50px;letter-spacing:0.529px;left:569.00px;color:#e6e4e7">Microsoft-Windows-Security-Auditing</span>
<span class="t" style="top:238.50px;letter-spacing:0.939px;left:814.90px;color:#e6e4e7">4625</span>
<span class="t" style="top:238.50px;letter-spacing:0.352px;left:888.00px;color:#e6e4e7">Logon</span>
<span class="t" style="top:238.50px;letter-spacing:0.421px;left:1091.90px;color:#e6e4e7">Security</span>
<span class="t" style="top:257.50px;letter-spacing:0.195px;left:307.50px;color:#e6e4e7">Failure Audit</span>
<span class="t" style="top:257.50px;letter-spacing:0.382px;left:436.00px;color:#e6e4e7">20.05.2021 at 07:53:47</span>
<span class="t" style="top:257.50px;letter-spacing:0.529px;left:569.00px;color:#e6e4e7">Microsoft-Windows-Security-Auditing</span>
<span class="t" style="top:257.50px;letter-spacing:0.939px;left:814.90px;color:#e6e4e7">4625</span>
<span class="t" style="top:257.50px;letter-spacing:0.352px;left:888.00px;color:#e6e4e7">Logon</span>
<span class="t" style="top:257.50px;letter-spacing:0.421px;left:1091.90px;color:#e6e4e7">Security</span>
<span class="t" style="top:276.50px;letter-spacing:0.195px;left:307.50px;color:#e6e4e7">Failure Audit</span>
<span class="t" style="top:276.50px;letter-spacing:0.382px;left:436.00px;color:#e6e4e7">20.05.2021 at 07:53:47</span>
<span class="t" style="top:276.50px;letter-spacing:0.529px;left:569.00px;color:#e6e4e7">Microsoft-Windows-Security-Auditing</span>
<span class="t" style="top:276.50px;letter-spacing:0.939px;left:814.90px;color:#e6e4e7">4625</span>
<span class="t" style="top:276.50px;letter-spacing:0.352px;left:888.00px;color:#e6e4e7">Logon</span>
<span class="t" style="top:276.50px;letter-spacing:0.421px;left:1091.90px;color:#e6e4e7">Security</span>
<span class="t" style="top:295.50px;letter-spacing:0.195px;left:307.50px;color:#e6e4e7">Failure Audit</span>
<span class="t" style="top:295.50px;letter-spacing:0.382px;left:436.00px;color:#e6e4e7">20.05.2021 at 07:53:47</span>
<span class="t" style="top:295.50px;letter-spacing:0.529px;left:569.00px;color:#e6e4e7">Microsoft-Windows-Security-Auditing</span>
<span class="t" style="top:295.50px;letter-spacing:0.939px;left:814.90px;color:#e6e4e7">4625</span>
<span class="t" style="top:295.50px;letter-spacing:0.352px;left:888.00px;color:#e6e4e7">Logon</span>
<span class="t" style="top:295.50px;letter-spacing:0.421px;left:1091.90px;color:#e6e4e7">Security</span>
<span class="t" style="top:314.50px;letter-spacing:0.195px;left:307.50px;color:#e6e4e7">Failure Audit</span>
<span class="t" style="top:314.50px;letter-spacing:0.382px;left:436.00px;color:#e6e4e7">20.05.2021 at 07:53:47</span>
<span class="t" style="top:314.50px;letter-spacing:0.529px;left:569.00px;color:#e6e4e7">Microsoft-Windows-Security-Auditing</span>
<span class="t" style="top:314.50px;letter-spacing:0.939px;left:814.90px;color:#e6e4e7">4625</span>
<span class="t" style="top:314.50px;letter-spacing:0.352px;left:888.00px;color:#e6e4e7">Logon</span>
<span class="t" style="top:314.50px;letter-spacing:0.421px;left:1091.90px;color:#e6e4e7">Security</span>
<span class="t" style="top:333.50px;letter-spacing:0.195px;left:307.50px;color:#e6e4e7">Failure Audit</span>
<span class="t" style="top:333.50px;letter-spacing:0.382px;left:436.00px;color:#e6e4e7">20.05.2021 at 07:53:47</span>
<span class="t" style="top:333.50px;letter-spacing:0.529px;left:569.00px;color:#e6e4e7">Microsoft-Windows-Security-Auditing</span>
<span class="t" style="top:333.50px;letter-spacing:0.939px;left:814.90px;color:#e6e4e7">4625</span>
<span class="t" style="top:333.50px;letter-spacing:0.352px;left:888.00px;color:#e6e4e7">Logon</span>
<span class="t" style="top:333.50px;letter-spacing:0.421px;left:1091.90px;color:#e6e4e7">Security</span>
<span class="t" style="top:352.50px;letter-spacing:0.195px;left:307.50px;color:#e6e4e7">Failure Audit</span>
<span class="t" style="top:352.50px;letter-spacing:0.382px;left:436.00px;color:#e6e4e7">20.05.2021 at 07:53:47</span>
<span class="t" style="top:352.50px;letter-spacing:0.529px;left:569.00px;color:#e6e4e7">Microsoft-Windows-Security-Auditing</span>
<span class="t" style="top:352.50px;letter-spacing:0.939px;left:814.90px;color:#e6e4e7">4625</span>
<span class="t" style="top:352.50px;letter-spacing:0.352px;left:888.00px;color:#e6e4e7">Logon</span>
<span class="t" style="top:352.50px;letter-spacing:0.421px;left:1091.90px;color:#e6e4e7">Security</span>
<span class="t b" style="top:463.50px;letter-spacing:0.224px;left:282.50px;color:#a19fa2">Event Details</span>
<span class="t" style="top:485.50px;letter-spacing:0.614px;left:592.00px;color:#e6e4e7">9e78cfdf-296b-4682-84fd-bafd5d67afa9|ManagementModuleID:</span>
<span class="t" style="top:485.50px;letter-spacing:0.418px;left:284.50px;color:#e6e4e7">2021-05-20 10:15:55,446 [INFO ] [Managemt] RequestID:</span>
<span class="t" style="top:499.50px;letter-spacing:0.301px;left:284.50px;color:#e6e4e7">RoyalServer.ManagementEndpoint.Module.EventLog|RequestCommand: GetEntries|RequestUsername: fx|ClientIP: 10.0.1.5|DestinationHost: localhost|DestinationUsername:</span>
<span class="t" style="top:513.50px;letter-spacing:0.346px;left:284.50px;color:#e6e4e7">Administrator|Arguments {WQLWhereClause: TimeWritten &gt;= &#x27;20210517081555.132404+000&#x27;,TimeZoneId: Europe/Vienna;60;CET;CET;CEST;[01:01:0001;03:31:1893;0;</span>
<span class="t" style="top:527.50px;letter-spacing:0.466px;left:284.50px;color:#e6e4e7">[1;00:00:00;1;1;];[1;23:54:38;3;31;];][03:31:1893;04:30:1916;0;[1;23:54:39;3;31;];[1;22:59:59;4;30;];][04:30:1916;10:01:1916;60;[1;23:00:00;4;30;];[1;00:59:59;10;1;];]</span>
<span class="t" style="top:541.50px;letter-spacing:0.201px;left:284.50px;color:#e6e4e7">[10:01:1916;04:16:1917;0;[1;...,}</span>
<span class="t" style="top:631.50px;letter-spacing:0.211px;right:912.29px;color:#a19fa2">Log Name:</span>
<span class="t" style="top:631.50px;letter-spacing:0.133px;left:382.50px;color:#e6e4e7">Royal Server Log</span>
<span class="t" style="top:653.50px;letter-spacing:0.263px;right:912.24px;color:#a19fa2">Source:</span>
<span class="t" style="top:653.50px;letter-spacing:0.070px;left:382.50px;color:#e6e4e7">RoyalServer.exe</span>
<span class="t" style="top:675.50px;letter-spacing:0.119px;right:912.38px;color:#a19fa2">Event ID:</span>
<span class="t" style="top:697.50px;letter-spacing:0.128px;right:912.37px;color:#a19fa2">Level:</span>
<span class="t" style="top:697.50px;letter-spacing:0.367px;left:406.25px;color:#e6e4e7">Information</span>
<span class="t" style="top:631.50px;letter-spacing:0.333px;right:601.27px;color:#a19fa2">Computer Name:</span>
<span class="t" style="top:631.50px;letter-spacing:-0.259px;left:693.10px;color:#e6e4e7">127.0.0.1</span>
<span class="t" style="top:653.50px;letter-spacing:0.339px;right:601.26px;color:#a19fa2">Date and Time:</span>
<span class="t" style="top:653.50px;letter-spacing:0.354px;left:693.10px;color:#e6e4e7">20.05.2021 at 08:15:55</span>
<span class="t" style="top:675.50px;letter-spacing:0.294px;right:601.31px;color:#a19fa2">Task Category:</span>
<span class="t" style="top:675.50px;letter-spacing:0.475px;left:693.10px;color:#e6e4e7">0</span>
<span class="t" style="top:697.50px;letter-spacing:0.230px;right:601.37px;color:#a19fa2">User:</span>
<span class="t" style="top:631.50px;letter-spacing:0.365px;left:866.25px;color:#a19fa2">Insertion Strings:</span>
<span class="t" style="top:162.00px;letter-spacing:-0.138px;left:343.00px;font-size:13px;color:#e9e9ea;z-index:9">Filter &#x27;Level&#x27;</span>
<span class="t" style="top:183.00px;letter-spacing:-0.394px;left:342.80px;font-size:13px;color:#e9e9ea;z-index:9">Choose Columns</span>
<span class="t" style="top:162.00px;letter-spacing:-0.277px;left:496.40px;font-size:13px;color:#e9e9ea;z-index:9">(All)</span>
<span class="t" style="top:194.00px;letter-spacing:-0.145px;left:496.40px;font-size:13px;color:#e9e9ea;z-index:9">Information</span>
<span class="t" style="top:215.00px;letter-spacing:-0.390px;left:496.40px;font-size:13px;color:#e9e9ea;z-index:9">Warning</span>
<span class="t" style="top:236.00px;letter-spacing:-0.573px;left:496.40px;font-size:13px;color:#e9e9ea;z-index:9">Error</span>
<span class="t" style="top:257.00px;letter-spacing:-0.205px;left:496.40px;font-size:13px;color:#e9e9ea;z-index:9">Success Audit</span>
<span class="t" style="top:278.00px;letter-spacing:-0.255px;left:496.40px;font-size:13px;color:#ffffff;z-index:9">Failure Audit</span>
<div class="a" style="left:56px;top:38px;width:1166px;height:686px;border:1px solid rgba(255,255,255,.21);border-radius:10px;z-index:20;"></div></div></body></html>
